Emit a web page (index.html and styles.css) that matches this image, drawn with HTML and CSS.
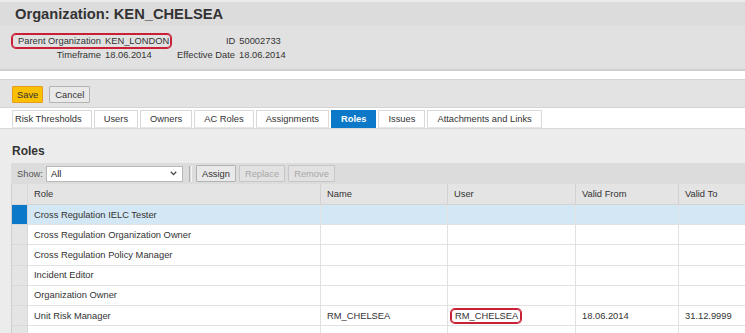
FILE: index.html
```html
<!DOCTYPE html>
<html lang="en">
<head>
    <meta charset="UTF-8">
    <meta name="viewport" content="width=device-width, initial-scale=1.0">
    <title>Organization: KEN_CHELSEA</title>
    <link rel="stylesheet" href="styles.css">
</head>
<body>

<!-- Object header -->
<div class="page-header">
    <h1>Organization: KEN_CHELSEA</h1>
    <div class="meta">
        <div class="meta-row">
            <span class="mark">
                <span class="label">Parent Organization</span>
                <span class="value">KEN_LONDON</span>
            </span>
            <span class="label label-2">ID</span>
            <span class="value">50002733</span>
        </div>
        <div class="meta-row">
            <span class="label">Timeframe</span>
            <span class="value value-1">18.06.2014</span>
            <span class="label label-2">Effective Date</span>
            <span class="value">18.06.2014</span>
        </div>
    </div>
</div>

<!-- Save / Cancel -->
<div class="actions">
    <button type="button" class="btn btn-primary">Save</button>
    <button type="button" class="btn">Cancel</button>
</div>

<!-- Tab strip -->
<div class="tabs">
    <span class="tab">Risk Thresholds</span>
    <span class="tab">Users</span>
    <span class="tab">Owners</span>
    <span class="tab">AC Roles</span>
    <span class="tab">Assignments</span>
    <span class="tab active">Roles</span>
    <span class="tab">Issues</span>
    <span class="tab">Attachments and Links</span>
</div>

<!-- Roles tab content -->
<div class="content">
    <h2>Roles</h2>

    <div class="grid-toolbar">
        <span class="show-label">Show:</span>
        <div class="select">
            <span>All</span>
            <svg width="7" height="5" viewBox="0 0 7 5"><polyline points="0.8,0.8 3.5,3.6 6.2,0.8" fill="none" stroke="#444" stroke-width="1.3"/></svg>
        </div>
        <span class="sep"></span>
        <button type="button" class="btn">Assign</button>
        <button type="button" class="btn" disabled>Replace</button>
        <button type="button" class="btn" disabled>Remove</button>
    </div>

    <table class="grid">
        <colgroup>
            <col class="c-sel">
            <col class="c-role">
            <col class="c-name">
            <col class="c-user">
            <col class="c-from">
            <col class="c-to">
        </colgroup>
        <thead>
            <tr>
                <th class="sel"></th>
                <th>Role</th>
                <th>Name</th>
                <th>User</th>
                <th>Valid From</th>
                <th>Valid To</th>
            </tr>
        </thead>
        <tbody>
            <tr class="selected">
                <td class="sel"></td>
                <td>Cross Regulation IELC Tester</td>
                <td></td><td></td><td></td><td></td>
            </tr>
            <tr>
                <td class="sel"></td>
                <td>Cross Regulation Organization Owner</td>
                <td></td><td></td><td></td><td></td>
            </tr>
            <tr>
                <td class="sel"></td>
                <td>Cross Regulation Policy Manager</td>
                <td></td><td></td><td></td><td></td>
            </tr>
            <tr>
                <td class="sel"></td>
                <td>Incident Editor</td>
                <td></td><td></td><td></td><td></td>
            </tr>
            <tr>
                <td class="sel"></td>
                <td>Organization Owner</td>
                <td></td><td></td><td></td><td></td>
            </tr>
            <tr>
                <td class="sel"></td>
                <td>Unit Risk Manager</td>
                <td>RM_CHELSEA</td>
                <td><span class="mark-cell">RM_CHELSEA</span></td>
                <td>18.06.2014</td>
                <td>31.12.9999</td>
            </tr>
            <tr>
                <td class="sel"></td>
                <td></td><td></td><td></td><td></td><td></td>
            </tr>
        </tbody>
    </table>
</div>

</body>
</html>
```

FILE: styles.css
```css
body {
    font-family: "Liberation Sans", Arial, sans-serif;
    font-size: 9.33px;
    color: #333;
    background-color: #fff;
    margin: 0;
    padding: 0;
    overflow: hidden;
}

/* header */
.page-header {
    background-color: #e1e1e1;
    border-top: 2px solid #ebebeb;
    border-bottom: 2px solid #cfcfcf;
    margin-bottom: 8px;
}

h1 {
    margin: 0;
    height: 24px;
    line-height: 24px;
    padding-left: 15px;
    background-color: #dcdcdc;
    font-size: 14.7px;
    font-weight: bold;
    color: #333;
}

.meta {
    padding: 8px 0 7px 12px;
}

.meta-row {
    display: flex;
    height: 14px;
    line-height: 14px;
}

.label {
    width: 89px;
    margin-right: 4px;
    text-align: right;
}

.label-2 {
    width: 58px;
}

.value-1 {
    width: 72px;
}

.mark {
    display: flex;
    margin-right: 6px;
    border-radius: 4px;
    box-shadow: 0 0 0 1px #c92035, inset 0 0 0 1px #c92035;
}

.mark .value {
    padding-right: 2px;
}

/* buttons */
.actions {
    display: flex;
    gap: 6px;
    background-color: #e3e3e3;
    border-top: 1px solid #d4d4d4;
    border-bottom: 1px solid #d4d4d4;
    padding: 6px 12px 4px;
}

.btn {
    font: inherit;
    color: #333;
    height: 17px;
    padding: 0 5px;
    background-color: #e9e9e9;
    border: 1px solid #b3b3b3;
    border-radius: 1px;
}

.btn-primary {
    padding: 0 4px;
    background-color: #f8c000;
    border-color: #e59c1c;
}

.btn:disabled {
    color: #a8a8a8;
    background-color: #e2e2e2;
    border-color: #c6c6c6;
}

/* tabs */
.tabs {
    display: flex;
    gap: 2px;
    background-color: #fff;
    border-bottom: 1px solid #d8d8d8;
    padding: 2px 0 0 12px;
}

.tab {
    height: 16px;
    line-height: 16px;
    padding: 0 9px;
    border: 1px solid #d9d9d9;
    border-bottom-color: #e6e6e6;
    white-space: nowrap;
}

.tab:first-child {
    padding-left: 2px;
}

.tab.active {
    background-color: #0b78c8;
    border-color: #0b78c8;
    color: #fff;
    font-weight: bold;
}

/* roles */
.content {
    background-color: #ececec;
    padding: 15px 0 0 11px;
}

h2 {
    margin: 0 0 4px 1px;
    font-size: 12px;
    line-height: 15px;
    font-weight: bold;
    color: #333;
}

.grid-toolbar {
    display: flex;
    align-items: center;
    gap: 3px;
    height: 21px;
    padding-left: 6px;
    background-color: #dcdcdc;
}

.show-label {
    color: #555;
}

.select {
    display: flex;
    align-items: center;
    justify-content: space-between;
    box-sizing: border-box;
    width: 137px;
    height: 16px;
    padding: 0 5px 0 4px;
    background-color: #fff;
    border: 1px solid #b8b8b8;
    color: #222;
}

.sep {
    width: 1px;
    height: 16px;
    margin: 0 1px 0 3px;
    border-left: 1px solid #b0b0b0;
    border-right: 1px solid #f4f4f4;
}

table.grid {
    table-layout: fixed;
    width: 734px;
    border-collapse: separate;
    border-spacing: 0;
    border-left: 1px solid #cfcfcf;
}

.c-sel { width: 16px; }
.c-role { width: 293px; }
.c-name { width: 127px; }
.c-user { width: 128px; }
.c-from { width: 103px; }
.c-to { width: 66px; }

th, td {
    padding: 0 6px;
    text-align: left;
    font-weight: normal;
    white-space: nowrap;
    overflow: hidden;
    border-right: 1px solid #e2e2e2;
    border-bottom: 1px solid #e2e2e2;
}

th:last-child,
td:last-child {
    border-right: none;
}

thead tr {
    height: 21px;
}

tbody tr {
    height: 20.2px;
}

th {
    background-color: #e4e4e4;
    border-right-color: #d2d2d2;
    border-bottom-color: #d4d4d4;
}

td {
    background-color: #fff;
}

.sel,
td.sel {
    padding: 0;
    background-color: #e4e4e4;
    border-right-color: #d8d8d8;
    border-bottom-color: #d8d8d8;
}

tr.selected td {
    background-color: #d3e7f4;
}

tr.selected td.sel {
    background-color: #0b78c8;
}

.mark-cell {
    display: inline-block;
    line-height: 14px;
    margin-left: -3px;
    padding: 0 3px 0 4px;
    border-radius: 4px;
    box-shadow: 0 0 0 1px #c92035, inset 0 0 0 1px #c92035;
}
```
